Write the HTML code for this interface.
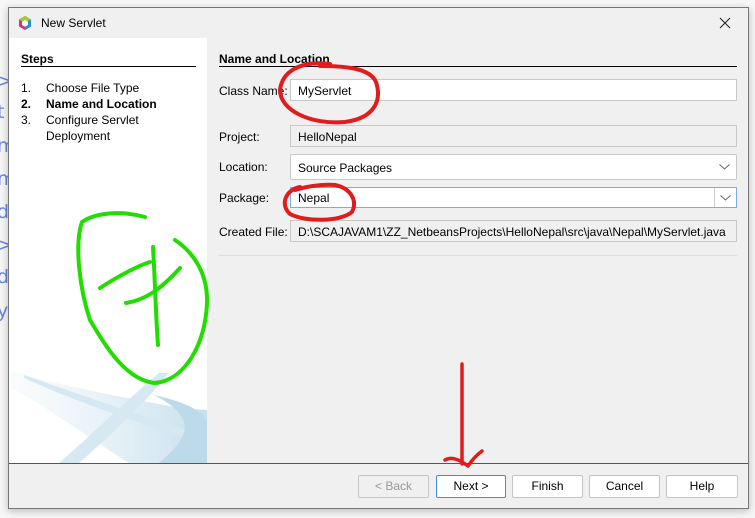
<!DOCTYPE html>
<html><head><style>
*{margin:0;padding:0;box-sizing:border-box}
body{width:755px;height:518px;background:#f7f7f7;position:relative;overflow:hidden;font-family:"Liberation Sans",sans-serif;font-size:12px;color:#000}
.a{position:absolute}
.win{left:8px;top:7px;width:741px;height:502px;background:#f0f0f0;border:1px solid #777;box-shadow:0 2px 8px rgba(0,0,0,.25)}
.inp{position:absolute;left:290px;width:447px;height:22px;border:1px solid #c8c8c8;background:#fff;padding:4px 7px;font-size:12px}
.ro{background:#f0f0f0}
.lbl{position:absolute;left:219px;font-size:12px}
.btn{position:absolute;top:475px;height:23px;border:1px solid #c4c4c4;background:#fff;border-radius:2px;text-align:center;line-height:21px;font-size:12px}
.bl{position:absolute;left:-3px;color:#6a86e0;font-family:"DejaVu Sans",sans-serif;font-size:19px}
</style></head><body>
<div class="bl" style="top:70px">&gt;</div>
<div class="bl" style="top:101px">t</div>
<div class="bl" style="top:135px">m</div>
<div class="bl" style="top:168px">m</div>
<div class="bl" style="top:201px">d</div>
<div class="bl" style="top:234px">&gt;</div>
<div class="bl" style="top:266px">d</div>
<div class="bl" style="top:300px">y</div>
<div class="a win"></div>
<svg class="a" style="left:17px;top:15px" width="16" height="16" viewBox="0 0 16 16"><polygon points="8,1 14,4.5 14,11.5 8,15 2,11.5 2,4.5" fill="#d8327a"/><polygon points="8,1 14,4.5 8,8 2,4.5" fill="#9acd32"/><polygon points="14,4.5 14,11.5 8,15 8,8" fill="#2a8ad8"/><polygon points="8,5 11,6.7 11,10 8,11.7 5,10 5,6.7" fill="#fff"/></svg>
<div class="a" style="left:41px;top:16px;font-size:12px">New Servlet</div>
<svg class="a" style="left:719px;top:17px" width="12" height="12"><path d="M1 1L11 11M11 1L1 11" stroke="#222" stroke-width="1.1"/></svg>
<div class="a" style="left:9px;top:38px;width:198px;height:425px;background:#fff;overflow:hidden">
<svg width="198" height="425" style="position:absolute;left:0;top:0"><defs><linearGradient id="g" x1="0" x2="1"><stop offset="0" stop-color="#d8e9f2" stop-opacity=".2"/><stop offset="1" stop-color="#aed2e6"/></linearGradient></defs>
<path d="M2 333 C60 350 120 360 170 370 L198 372 L198 425 L120 425 C80 400 40 370 2 350Z" fill="url(#g)" opacity=".7"/>
<path d="M15 337 C80 360 140 380 190 395 L185 402 C130 385 70 365 15 340Z" fill="#d6e8f1"/>
<path d="M150 335 C120 360 90 390 50 425 L70 425 C110 390 140 360 160 335Z" fill="#d6e8f1"/>
<path d="M145 357 C180 365 200 375 198 390 L198 425 L150 425 C180 400 190 380 145 357Z" fill="#bcdaea"/></svg>
</div>
<div class="a" style="left:21px;top:52px;font-weight:bold">Steps</div>
<div class="a" style="left:21px;top:66px;width:175px;height:1px;background:#000"></div>
<div class="a" style="left:21px;top:80px;line-height:16px">1.</div><div class="a" style="left:46px;top:80px;line-height:16px">Choose File Type</div>
<div class="a" style="left:21px;top:96px;line-height:16px;font-weight:bold">2.</div><div class="a" style="left:46px;top:96px;line-height:16px;font-weight:bold">Name and Location</div>
<div class="a" style="left:21px;top:112px;line-height:16px">3.</div><div class="a" style="left:46px;top:112px;line-height:16px">Configure Servlet<br>Deployment</div>
<div class="a" style="left:219px;top:52px;font-weight:bold">Name and Location</div>
<div class="a" style="left:219px;top:66px;width:518px;height:1px;background:#000"></div>
<div class="lbl" style="top:84px">Class Name:</div><div class="inp" style="top:79px">MyServlet</div>
<div class="lbl" style="top:130px">Project:</div><div class="inp ro" style="top:125px">HelloNepal</div>
<div class="lbl" style="top:160px">Location:</div><div class="inp" style="top:154px;height:26px;border-radius:2px;padding-top:6px">Source Packages<svg style="position:absolute;right:6px;top:9px" width="11" height="6"><path d="M0.5 0.5L5.5 5L10.5 0.5" stroke="#666" fill="none"/></svg></div>
<div class="lbl" style="top:191px">Package:</div><div class="inp" style="top:187px;height:21px;border-color:#7aaee0;padding-top:3px">Nepal<span style="position:absolute;right:0;top:0;width:22px;height:19px;border-left:1px solid #ccc"><svg style="position:absolute;left:5px;top:7px" width="11" height="6"><path d="M0.5 0.5L5.5 5L10.5 0.5" stroke="#666" fill="none"/></svg></span></div>
<div class="lbl" style="top:225px">Created File:</div><div class="inp ro" style="top:220px">D:\SCAJAVAM1\ZZ_NetbeansProjects\HelloNepal\src\java\Nepal\MyServlet.java</div>
<div class="a" style="left:219px;top:255px;width:518px;height:1px;background:#ddd"></div>
<div class="a" style="left:9px;top:463px;width:739px;height:1px;background:#555"></div>
<div class="btn" style="left:358px;width:71px;color:#999;background:#f0f0f0">&lt; Back</div>
<div class="btn" style="left:436px;width:70px;border-color:#3c8ee0">Next &gt;</div>
<div class="btn" style="left:512px;width:71px">Finish</div>
<div class="btn" style="left:589px;width:71px">Cancel</div>
<div class="btn" style="left:666px;width:72px">Help</div>
<svg class="a" style="left:0;top:0" width="755" height="518" fill="none" stroke-linecap="round" stroke-linejoin="round">
<path d="M330 64 C300 60 282 72 280 90 C280 110 310 125 345 122 C375 118 382 100 376 82 C370 68 345 66 320 66" stroke="#e01c1c" stroke-width="4"/>
<path d="M300 187 C285 190 280 205 290 214 C305 222 340 222 352 212 C358 200 350 188 335 185 C320 184 305 187 295 190" stroke="#e01c1c" stroke-width="4"/>
<path d="M145 217 C120 210 95 213 82 222 C74 245 80 290 90 320 C105 345 125 380 155 383 C185 380 205 345 207 303 C208 270 190 250 175 240" stroke="#22dd00" stroke-width="4"/>
<path d="M100 288 C120 275 140 265 150 262 M126 303 C145 300 160 290 180 268 M153 247 C155 280 156 320 158 345" stroke="#22dd00" stroke-width="4"/>
<path d="M462 364 L462 464 M445 460 C452 456 460 460 468 466 C472 460 478 454 482 451" stroke="#e01c1c" stroke-width="3.5"/>
</svg>
</body></html>
